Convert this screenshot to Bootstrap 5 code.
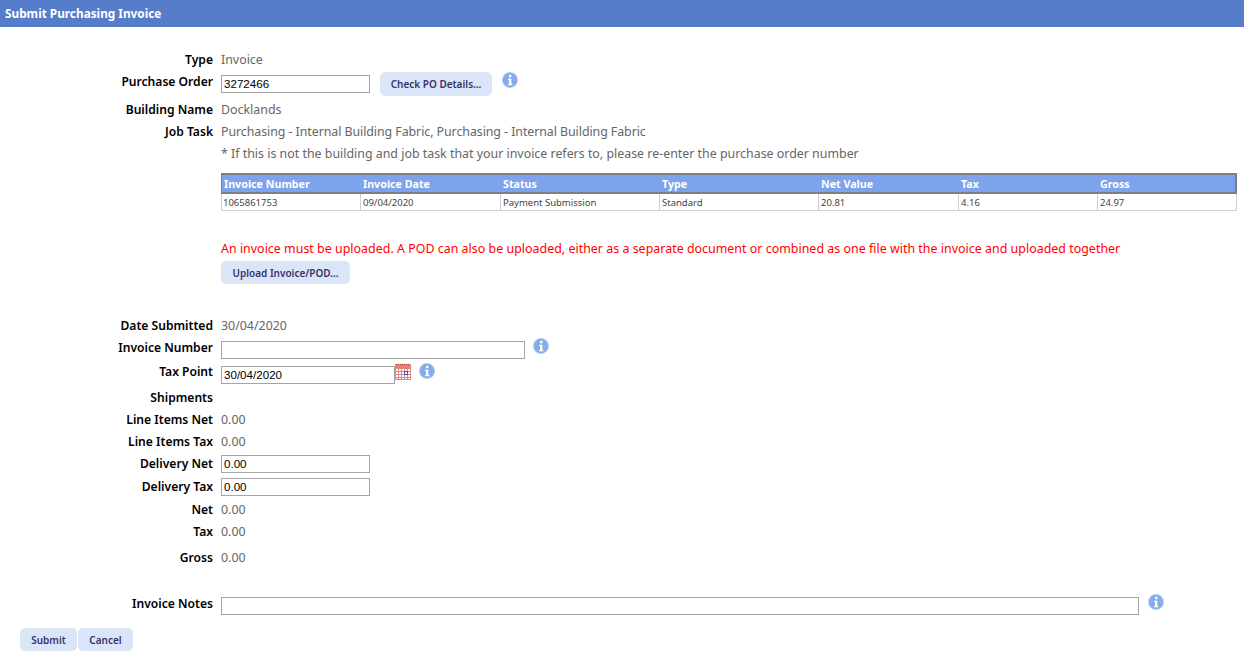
<!DOCTYPE html>
<html lang="en"><head><meta charset="utf-8"><title>Submit Purchasing Invoice</title>
<link href="https://cdn.jsdelivr.net/npm/bootstrap@5.3.0/dist/css/bootstrap.min.css" rel="stylesheet">
<style>
html,body{height:100%}
body{font-family:"Noto Sans","Open Sans",sans-serif;font-size:12.4px;color:#666;background:#fff;overflow:hidden;line-height:22px}
.page-head{background:#567dca;color:#fff;height:27px;line-height:27px;padding-left:5px;font-weight:700;font-size:11.8px}
.frm{padding-top:22px}
.frm-row{display:flex;min-height:22px}
.frm-label{width:213px;flex:none;text-align:right;color:#000;font-weight:600;font-size:12.1px}
.frm-value{margin-left:8px;flex:1;min-width:0;display:flex;align-items:flex-start}
.tight{letter-spacing:-.065px}
.fld{border:1px solid #a5a5a5;height:18px;padding:0 2px;font-family:"Liberation Sans",sans-serif;font-size:11.6px;color:#000;background:#fff;border-radius:0;outline:0;display:block}
.w-149{width:149px}.w-304{width:304px}.w-175{width:174px}.w-918{width:918px}
.act{background:#dae5f8;border:0;border-radius:5px;color:#37336b;font-weight:600;font-size:10px;padding:0;line-height:1}
.act-po{width:112px;height:24px;margin-left:10px;margin-top:1px}
.act-up{width:129px;height:23px}
.act-sub{width:57px;height:23px}
.act-can{width:55px;height:23px}
.inf{display:block;width:16px;height:16px;flex:none}
.gap-top-4{margin-top:4px}
.gap-top-5{margin-top:5px}
.gap-top-2{margin-top:2px}
.r-po{height:28px}
.r-inv{height:24px}
.r-tax{height:26px}
.r-del{height:23px}
.r-gross{height:30px;padding-top:4px}
.sp-tbl{margin-top:8px;margin-left:221px;width:1016px}
.grid-t{table-layout:fixed;border-collapse:separate;border-spacing:0;width:1016px;margin:0;font-size:9.5px;line-height:14px}
.grid-t th{background:#7ca3ec;color:#fff;font-weight:700;font-size:10.7px;padding:1px 0 0 2px;border-top:2px solid #7f7f7f;border-bottom:2px solid #7f7f7f;height:21px;text-align:left;line-height:15px}
.grid-t th:first-child{border-left:1px solid #7f7f7f}.grid-t th:last-child{border-right:2px solid #7f7f7f}
.grid-t td{border-right:1px solid #d0d0d0;border-bottom:1px solid #d0d0d0;padding:1px 0 0 2px;height:17px;color:#444;background:#fff}
.grid-t td:first-child{border-left:1px solid #d0d0d0;padding-left:1px}
.c140{width:140px}.c159{width:159px}.c139{width:139px}
.warn{color:#f00;margin-top:27px;margin-left:221px;height:22px;letter-spacing:.027px}
.up-row{margin-left:221px;margin-top:1px;height:23px}
.sect2{margin-top:31px}
.sect3{margin-top:20px}
.foot{margin-left:20px;margin-top:13px}
.foot .act+.act{margin-left:1px}
.ico-1{margin-left:10px;margin-top:1px}
.ico-2{margin-left:8px;margin-top:1px}
.ico-3{margin-left:8px;margin-top:2px}
.ico-4{margin-left:9px;margin-top:1px}
.cal{margin-top:3px;margin-left:0}
</style></head><body>
<svg class="d-none"><defs>
<symbol id="i-info" viewBox="0 0 16 16"><circle cx="8" cy="8" r="8" fill="#bcd2f3"/><circle cx="8" cy="8" r="7.200" fill="#83ace9"/><rect x="7" y="2.800" width="2.400" height="2.400" fill="#fff"/><path d="M6 6.700h3.400v5.200h1v1.400H6v-1.400h1V8H6z" fill="#fff"/></symbol>
<symbol id="i-cal" viewBox="0 0 16 16"><rect x=".5" y=".5" width="15" height="15" fill="#fff" stroke="#e08a88"/><rect x="0" y="1" width="16" height="3" fill="#e9807c"/><path d="M1 .5h1M3 .5h1M5 .5h1M7 .5h1M9 .5h1M11 .5h1M13 .5h1" stroke="#a83a3a"/><path d="M0 4.500h16M0 7.500h16M0 10.500h16M0 13.500h16M3.500 4v12M6.500 4v12M9.500 4v12M12.500 4v12" stroke="#e8837f"/><rect x="9.500" y="7.500" width="3" height="3" fill="#fff" stroke="#2f5fd0"/></symbol>
</defs></svg>
<div class="page-head">Submit Purchasing Invoice</div>
<form class="frm" onsubmit="return false">
<div class="frm-row"><div class="frm-label">Type</div><div class="frm-value">Invoice</div></div>
<div class="frm-row r-po"><div class="frm-label">Purchase Order</div><div class="frm-value"><input class="fld w-149 gap-top-4" value="3272466"><button class="act act-po" type="button">Check PO Details...</button><svg class="inf ico-1"><use href="#i-info"/></svg></div></div>
<div class="frm-row"><div class="frm-label">Building Name</div><div class="frm-value">Docklands</div></div>
<div class="frm-row"><div class="frm-label">Job Task</div><div class="frm-value tight">Purchasing - Internal Building Fabric, Purchasing - Internal Building Fabric</div></div>
<div class="frm-row"><div class="frm-label"></div><div class="frm-value">* If this is not the building and job task that your invoice refers to, please re-enter the purchase order number</div></div>
<div class="sp-tbl"><table class="grid-t"><colgroup><col class="c140"><col class="c140"><col class="c159"><col class="c159"><col class="c140"><col class="c139"><col class="c139"></colgroup>
<thead><tr><th>Invoice Number</th><th>Invoice Date</th><th>Status</th><th>Type</th><th>Net Value</th><th>Tax</th><th>Gross</th></tr></thead>
<tbody><tr><td>1065861753</td><td>09/04/2020</td><td>Payment Submission</td><td>Standard</td><td>20.81</td><td>4.16</td><td>24.97</td></tr></tbody></table></div>
<div class="warn">An invoice must be uploaded. A POD can also be uploaded, either as a separate document or combined as one file with the invoice and uploaded together</div>
<div class="up-row"><button class="act act-up" type="button">Upload Invoice/POD...</button></div>
<div class="sect2">
<div class="frm-row"><div class="frm-label">Date Submitted</div><div class="frm-value">30/04/2020</div></div>
<div class="frm-row r-inv"><div class="frm-label">Invoice Number</div><div class="frm-value"><input class="fld w-304 gap-top-4"><svg class="inf ico-2"><use href="#i-info"/></svg></div></div>
<div class="frm-row r-tax"><div class="frm-label">Tax Point</div><div class="frm-value"><input class="fld w-175 gap-top-5" value="30/04/2020"><svg class="inf cal"><use href="#i-cal"/></svg><svg class="inf ico-3"><use href="#i-info"/></svg></div></div>
<div class="frm-row"><div class="frm-label">Shipments</div><div class="frm-value"></div></div>
<div class="frm-row"><div class="frm-label">Line Items Net</div><div class="frm-value">0.00</div></div>
<div class="frm-row"><div class="frm-label">Line Items Tax</div><div class="frm-value">0.00</div></div>
<div class="frm-row r-del"><div class="frm-label">Delivery Net</div><div class="frm-value"><input class="fld w-149 gap-top-2" value="0.00"></div></div>
<div class="frm-row r-del"><div class="frm-label">Delivery Tax</div><div class="frm-value"><input class="fld w-149 gap-top-2" value="0.00"></div></div>
<div class="frm-row"><div class="frm-label">Net</div><div class="frm-value">0.00</div></div>
<div class="frm-row"><div class="frm-label">Tax</div><div class="frm-value">0.00</div></div>
<div class="frm-row r-gross"><div class="frm-label">Gross</div><div class="frm-value">0.00</div></div>
</div>
<div class="frm-row sect3"><div class="frm-label">Invoice Notes</div><div class="frm-value"><input class="fld w-918 gap-top-4"><svg class="inf ico-4"><use href="#i-info"/></svg></div></div>
<div class="foot d-flex"><button class="act act-sub" type="button">Submit</button><button class="act act-can" type="button">Cancel</button></div>
</form>
<script src="https://cdn.jsdelivr.net/npm/bootstrap@5.3.0/dist/js/bootstrap.bundle.min.js"></script>
</body></html>
